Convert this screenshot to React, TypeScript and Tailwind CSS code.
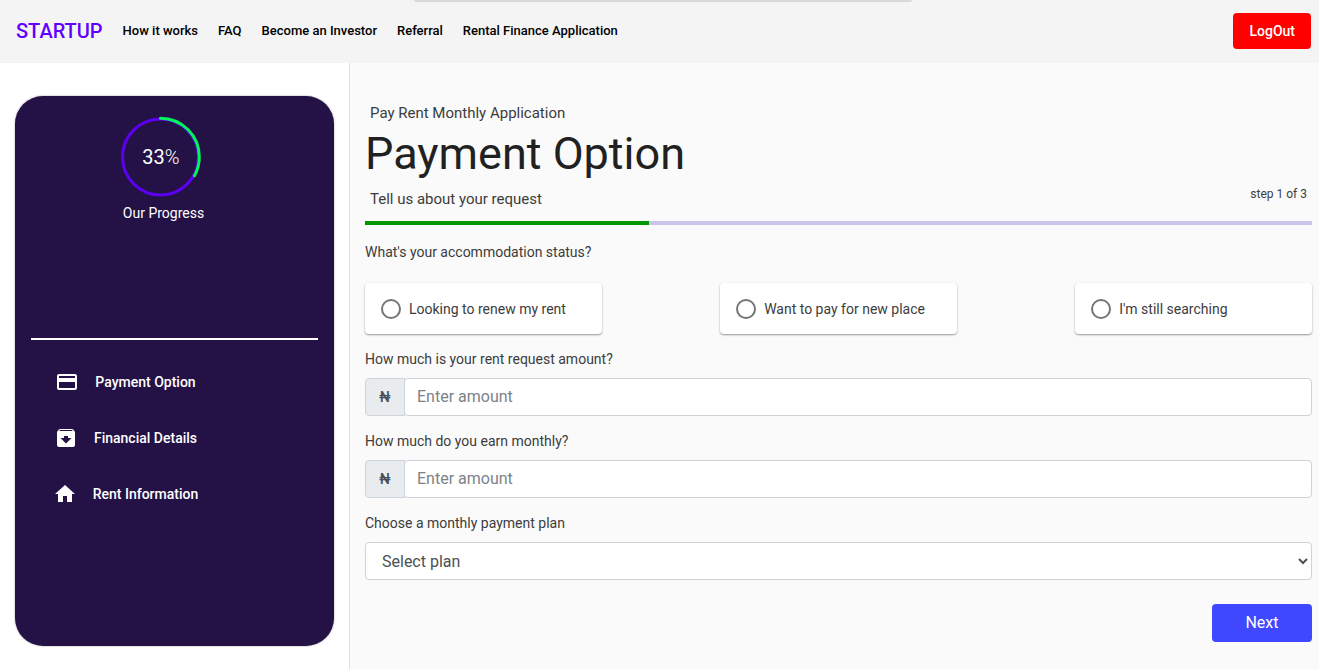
import { MdPayment, MdArchive, MdHome } from "react-icons/md";

const links = ["How it works", "FAQ", "Become an Investor", "Referral", "Rental Finance Application"];

const steps = [
  { label: "Payment Option", Icon: MdPayment },
  { label: "Financial Details", Icon: MdArchive },
  { label: "Rent Information", Icon: MdHome },
];

const statuses = ["Looking to renew my rent", "Want to pay for new place", "I'm still searching"];

function Header() {
  return (
    <header className="relative flex h-[63px] items-center justify-between bg-[#f4f4f4] pr-2 pb-0.5 pl-4">
      <div className="absolute top-0 left-[414px] h-0.5 w-[498px] rounded-b bg-[#d9d9d9]" />
      <div className="flex items-center gap-5">
        <a href="#" className="text-xl font-medium text-[#6200ff]">
          STARTUP
        </a>
        <nav className="flex gap-5 text-[13px] font-medium text-black">
          {links.map((link) => (
            <a key={link} href="#">
              {link}
            </a>
          ))}
        </nav>
      </div>
      <button type="button" className="h-9 rounded bg-[#ff0000] px-4 text-sm font-medium text-white">
        LogOut
      </button>
    </header>
  );
}

function ProgressRing() {
  return (
    <div className="relative flex size-[82px] items-center justify-center">
      <svg className="absolute inset-0" width="82" height="82" viewBox="0 0 82 82" fill="none" aria-hidden="true">
        <circle cx="40.5" cy="41" r="38" stroke="#5b00f0" strokeWidth="3" />
        <circle
          cx="40.5"
          cy="41"
          r="38.8"
          stroke="#00f55a"
          strokeWidth="3"
          strokeLinecap="round"
          pathLength="100"
          strokeDasharray="33 100"
          transform="rotate(-90 40.5 41)"
        />
      </svg>
      <p className="text-xl text-white">
        33<span className="font-light">%</span>
      </p>
    </div>
  );
}

function Sidebar() {
  return (
    <aside className="w-[350px] shrink-0 border-r border-[#e0e0e0] bg-white px-[15px] pt-[33px] pb-[23px]">
      <div className="flex h-[550px] flex-col rounded-[28px] bg-[#241145] px-4 pt-5 text-white shadow-[0_0_2px_rgba(0,0,0,0.4)]">
        <div className="flex h-[222px] flex-col items-center pr-[27px]">
          <ProgressRing />
          <p className="mt-[5px] pl-[5px] text-sm">Our Progress</p>
        </div>
        <hr className="border-t-2 border-white" />
        <ul className="mt-3.5 w-[189px]">
          {steps.map(({ label, Icon }) => (
            <li key={label}>
              <a href="#" className="flex h-14 items-center justify-center gap-4 text-sm font-medium">
                <Icon size={24} />
                {label}
              </a>
            </li>
          ))}
        </ul>
      </div>
    </aside>
  );
}

function AmountField({ id, label }: { id: string; label: string }) {
  return (
    <div className="flex flex-col gap-[9px]">
      <label htmlFor={id} className="leading-5">
        {label}
      </label>
      <div className="flex h-[38px]">
        <span className="flex w-10 items-center justify-center rounded-l border border-[#ced4da] bg-[#e9ecef] text-sm font-medium text-[#495057]">
          ₦
        </span>
        <input
          id={id}
          type="text"
          placeholder="Enter amount"
          className="-ml-px min-w-0 flex-1 rounded border border-[#ced4da] bg-white px-3 text-base text-[#495057] placeholder:text-[#7b838a]"
        />
      </div>
    </div>
  );
}

export default function App() {
  return (
    <div className="flex min-h-screen flex-col bg-[#fafafa] font-[Roboto,sans-serif] text-[#212121]">
      <Header />
      <div className="flex flex-1">
        <Sidebar />
        <main className="min-w-0 flex-1 pt-[38px] pr-[7px] pb-6 pl-[15px]">
          <p className="pl-[5px] text-[15px] leading-6 text-[#3c3c3c]">Pay Rent Monthly Application</p>
          <h1 className="text-[45px] leading-[58px]">Payment Option</h1>
          <div className="mt-[3px] flex items-start justify-between px-[5px] text-[#3c3c3c]">
            <p className="text-[15px] leading-[26px]">Tell us about your request</p>
            <p className="text-xs">step 1 of 3</p>
          </div>
          <div className="mt-[9px] h-1 bg-[#cbc4ea]">
            <div className="h-full w-[30%] bg-[#009600]" />
          </div>

          <form className="mt-[17px] flex flex-col gap-[15px] text-sm text-[#3c3c3c]">
            <fieldset>
              <legend className="leading-5">What's your accommodation status?</legend>
              <div className="mt-[21px] flex justify-between">
                {statuses.map((status) => (
                  <label
                    key={status}
                    className="flex h-[51px] w-1/4 items-center gap-2 rounded bg-white px-4 pt-px shadow-[0_1px_2px_rgba(0,0,0,0.4)]"
                  >
                    <input
                      type="radio"
                      name="status"
                      className="size-5 shrink-0 appearance-none rounded-full border-2 border-[#757575] checked:border-[6px] checked:border-[#4048ff]"
                    />
                    {status}
                  </label>
                ))}
              </div>
            </fieldset>
            <AmountField id="rent-amount" label="How much is your rent request amount?" />
            <AmountField id="monthly-income" label="How much do you earn monthly?" />
            <div className="flex flex-col gap-[9px]">
              <label htmlFor="plan" className="leading-5">
                Choose a monthly payment plan
              </label>
              <select
                id="plan"
                className="h-[38px] w-full rounded border border-[#ced4da] bg-white pl-3 text-base text-[#495057]"
              >
                <option>Select plan</option>
              </select>
            </div>
            <button
              type="button"
              className="mt-[9px] h-[38px] w-[100px] self-end rounded bg-[#4048ff] text-base text-white"
            >
              Next
            </button>
          </form>
        </main>
      </div>
    </div>
  );
}
